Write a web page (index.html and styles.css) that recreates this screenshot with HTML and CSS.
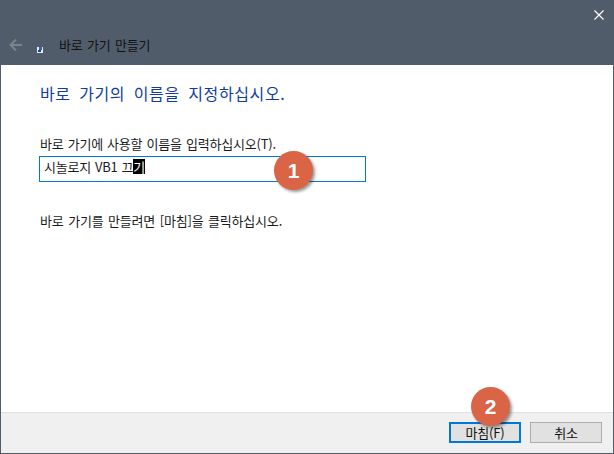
FILE: index.html
```html
<!DOCTYPE html>
<html lang="ko">
<head>
<meta charset="utf-8">
<title>바로 가기 만들기</title>
<link rel="stylesheet" href="styles.css">
</head>
<body>
<div class="window">
  <header class="titlebar">
    <div class="caption">
      <svg class="close" width="10" height="10" viewBox="0 0 10 10"><path d="M.5.5l9 9M9.5.5l-9 9" stroke="#fff" stroke-width="1.2" fill="none"/></svg>
    </div>
    <div class="nav">
      <svg class="back" width="14" height="14" viewBox="0 0 14 14"><path d="M1 7h12M7 1.5 1.5 7 7 12.5" stroke="#7c838b" stroke-width="2" fill="none"/></svg>
      <svg class="appicon" width="6" height="6" viewBox="0 0 6 6"><rect width="6" height="6" fill="#e8ecf2"/><rect x="2" y="0" width="3" height="3" fill="#2a63b0"/><rect x="1" y="3" width="3" height="2" fill="#1c3f78"/></svg>
      <span class="title">바로 가기 만들기</span>
    </div>
  </header>
  <main class="content">
    <h1 class="heading">바로 가기의 이름을 지정하십시오.</h1>
    <label class="label">바로 가기에 사용할 이름을 입력하십시오(T).</label>
    <div class="field">시놀로지 VB1 끄<span class="sel">기</span>
      <span class="badge badge-one">1</span>
    </div>
    <p class="hint">바로 가기를 만들려면 [마침]을 클릭하십시오.</p>
  </main>
  <footer class="footer">
    <div class="btn-wrap">
      <span class="badge badge-two">2</span>
      <button class="btn primary">마침(F)</button>
    </div>
    <button class="btn">취소</button>
  </footer>
</div>
</body>
</html>
```
FILE: styles.css
```css
* { box-sizing: border-box; }
html, body { margin: 0; height: 100%; }
body { background: #fff; font-family: "Noto Sans CJK KR", "Liberation Sans", sans-serif; font-size: 13px; letter-spacing: -.2px; word-spacing: 1px; color: #1a1a1a; overflow: hidden; }
.window { width: 614px; height: 454px; display: flex; flex-direction: column; border: 1px solid #515c6b; border-top: 0; }
.titlebar { height: 65px; background: #515c6b; display: flex; flex-direction: column; flex: none; }
.caption { height: 31px; display: flex; justify-content: flex-end; align-items: flex-start; padding: 10px 9px 0 0; }
.nav { display: flex; align-items: center; padding-left: 8px; height: 28px; }
.back { flex: none; }
.appicon { margin: 10px 0 0 14px; flex: none; }
.title { margin-left: 16px; color: #111; line-height: 16px; }
.content { flex: 1; padding: 17px 0 0 38px; }
.heading { margin: 0 0 0 1px; font-size: 16px; font-weight: 400; color: #0f3d9e; line-height: 22px; letter-spacing: .6px; word-spacing: 3.5px; }
.label { display: block; margin: 31px 0 0 1px; line-height: 17px; word-spacing: .7px; }
.field { position: relative; width: 327px; height: 26px; margin-top: 4px; border: 1px solid #0078d7; padding: 0 4px; line-height: 20px; word-spacing: .5px; }
.sel { background: #000; color: #fff; display: inline-block; height: 15px; line-height: 15px; vertical-align: top; margin-top: 2px; }
.hint { margin: 30px 0 0 1px; line-height: 17px; word-spacing: 1.2px; }
.footer { height: 41px; flex: none; background: #f0f0f0; border-top: 1px solid #dfdfdf; display: flex; justify-content: flex-end; gap: 9px; padding: 9px 11px 0 0; }
.btn-wrap { position: relative; }
.btn { display: block; width: 72px; height: 21px; background: #e1e1e1; border: 1px solid #adadad; font: inherit; letter-spacing: inherit; color: #111; padding: 0; line-height: 17px; }
.primary { border: 2px solid #0078d7; }
.badge { position: absolute; width: 39px; height: 39px; border-radius: 50%; background: #d96446; color: #fff; font: 700 21px/39px "Liberation Sans", sans-serif; text-align: center; box-shadow: 2px 2px 3px rgba(0,0,0,.4); }
.badge-one { left: 234px; top: -6px; }
.badge-two { left: 22px; top: -35px; }
```
